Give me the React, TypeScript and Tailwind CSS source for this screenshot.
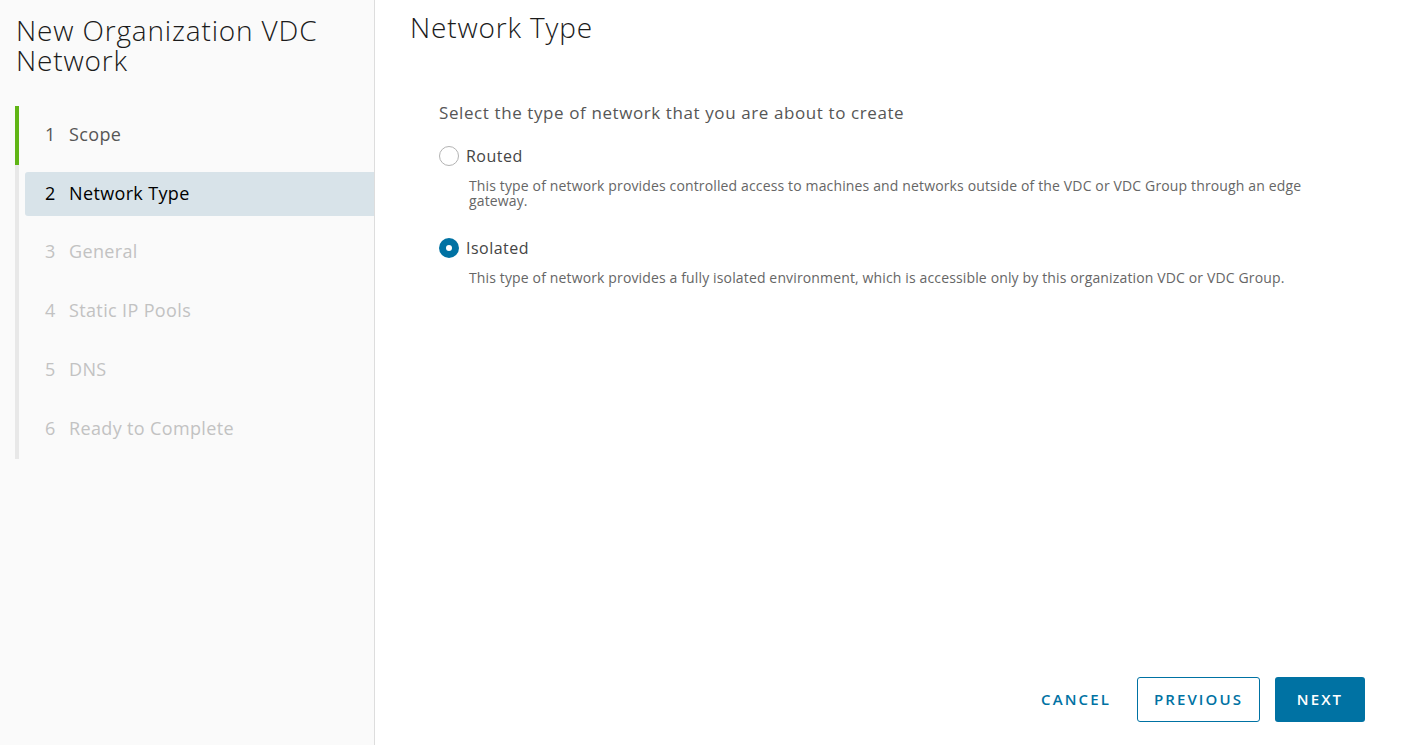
const steps = [
  { n: 1, label: 'Scope', state: 'done' },
  { n: 2, label: 'Network Type', state: 'current' },
  { n: 3, label: 'General', state: 'todo' },
  { n: 4, label: 'Static IP Pools', state: 'todo' },
  { n: 5, label: 'DNS', state: 'todo' },
  { n: 6, label: 'Ready to Complete', state: 'todo' },
];

const options = [
  {
    id: 'routed',
    label: 'Routed',
    desc: 'This type of network provides controlled access to machines and networks outside of the VDC or VDC Group through an edge gateway.',
    checked: false,
  },
  {
    id: 'isolated',
    label: 'Isolated',
    desc: 'This type of network provides a fully isolated environment, which is accessible only by this organization VDC or VDC Group.',
    checked: true,
  },
];

function Radio({ checked }: { checked: boolean }) {
  if (checked) {
    return (
      <span className="flex h-[20px] w-[20px] shrink-0 items-center justify-center rounded-full bg-[#0072a3]">
        <span className="h-[6px] w-[6px] rounded-full bg-white" />
      </span>
    );
  }
  return <span className="h-[20px] w-[20px] shrink-0 rounded-full border border-[#b3b3b3] bg-white" />;
}

export default function App() {
  return (
    <div
      className="flex h-[745px] w-full bg-white text-[#333]"
      style={{ fontFamily: '"Open Sans", "Liberation Sans", sans-serif' }}
    >
      {/* wizard steps */}
      <aside className="flex w-[375px] shrink-0 flex-col border-r border-[#dddddd] bg-[#fafafa]">
        <h1 className="px-[16px] pt-[15px] text-[28px] font-light leading-[30px] tracking-[0.03em] text-[#1b1b1b]">
          New Organization VDC Network
        </h1>
        <nav className="mt-[31px] flex flex-col pl-[15px]">
          {steps.map((s) => (
            <div key={s.n} className="flex h-[58.8px] items-stretch">
              <div className={s.state === 'done' ? 'w-[4px] bg-[#60b515]' : 'w-[4px] bg-[#e8e8e8]'} />
              <div className="flex flex-1 items-center pl-[6px]">
                <div
                  className={
                    s.state === 'current'
                      ? 'flex h-[44px] flex-1 items-center rounded-l-[3px] bg-[#d8e3e9] pb-[2px] pl-[20px] text-[18px] tracking-[0.02em] text-[#000]'
                      : s.state === 'done'
                        ? 'flex h-[44px] flex-1 items-center pb-[2px] pl-[20px] text-[18px] tracking-[0.02em] text-[#565656]'
                        : 'flex h-[44px] flex-1 items-center pb-[2px] pl-[20px] text-[18px] tracking-[0.02em] text-[#c2c2c2]'
                  }
                >
                  <span className="w-[24px]">{s.n}</span>
                  <span>{s.label}</span>
                </div>
              </div>
            </div>
          ))}
        </nav>
      </aside>

      {/* step content */}
      <main className="flex flex-1 flex-col pb-[23px] pl-[35px] pr-[60px]">
        <h2 className="pt-[9px] text-[28px] font-light leading-[36px] tracking-[0.03em] text-[#1b1b1b]">
          Network Type
        </h2>
        <div className="mt-[56px] pl-[29px]">
          <p className="text-[17px] leading-[24px] tracking-[0.035em] text-[#565656]">
            Select the type of network that you are about to create
          </p>
          <div className="mt-[19px] flex flex-col gap-[28px]">
            {options.map((o) => (
              <div key={o.id}>
                <label className="flex items-center gap-[7px]">
                  <Radio checked={o.checked} />
                  <span className="text-[16px] leading-[24px] tracking-[0.03em] text-[#454545]">{o.label}</span>
                </label>
                <p className="mt-[10px] max-w-[865px] pl-[30px] text-[14px] leading-[15px] tracking-[0.01em] text-[#666]">
                  {o.desc}
                </p>
              </div>
            ))}
          </div>
        </div>

        <div className="mt-auto flex items-center justify-end">
          <button className="mr-[14px] h-[45px] px-[12px] text-[15px] font-semibold tracking-[0.14em] text-[#0072a3]">
            CANCEL
          </button>
          <button className="h-[45px] rounded-[3px] border border-[#0072a3] bg-white px-[16px] text-[15px] font-semibold tracking-[0.14em] text-[#0072a3]">
            PREVIOUS
          </button>
          <button className="ml-[15px] h-[45px] w-[90px] rounded-[3px] bg-[#0072a3] text-[15px] font-semibold tracking-[0.14em] text-white">
            NEXT
          </button>
        </div>
      </main>
    </div>
  );
}
